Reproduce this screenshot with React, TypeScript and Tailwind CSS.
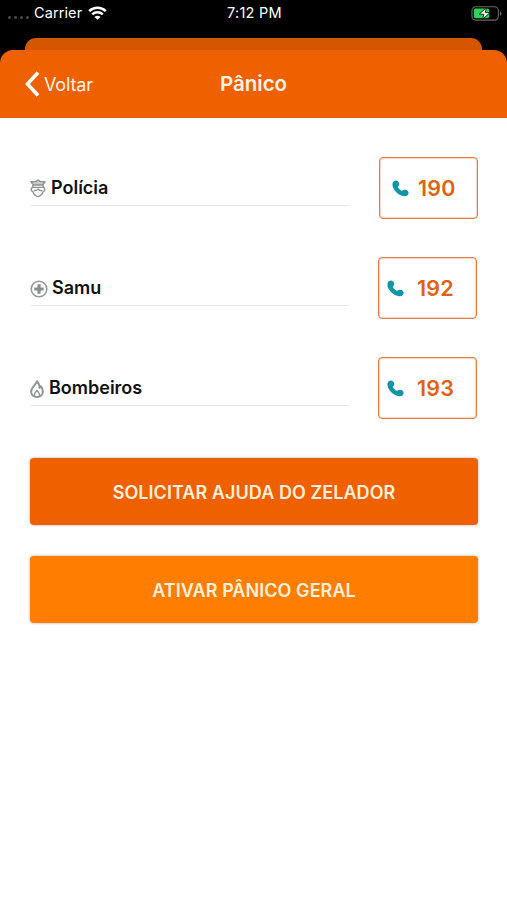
import type { ReactNode } from "react";

interface EmergencyRowProps {
  label: string;
  number: string;
  icon: ReactNode;
  className?: string;
  labelClassName: string;
  phoneClassName: string;
}

function StatusBar() {
  return (
    <div className="flex h-[38px] items-start text-white">
      <div className="flex h-[26px] flex-1 items-center pl-2">
        <div className="mt-[9px] flex gap-[3px]">
          <span className="size-[3px] rounded-full bg-[#4a4a4a]" />
          <span className="size-[3px] rounded-full bg-[#4a4a4a]" />
          <span className="size-[3px] rounded-full bg-[#4a4a4a]" />
          <span className="size-[3px] rounded-full bg-[#4a4a4a]" />
        </div>
        <span className="ml-[5px] w-[49px] text-[14.5px] tracking-[0.1px] whitespace-nowrap">Carrier</span>
        <svg className="ml-[5px]" width="19" height="14" viewBox="0 0 19 14" fill="none">
          <path d="M1.2 5.1a12 12 0 0 1 16.6 0" stroke="white" strokeWidth="2.7" />
          <path d="M4.2 8.3a7.7 7.7 0 0 1 10.6 0" stroke="white" strokeWidth="2.5" />
          <path d="M9.5 13.8 6.5 11a4.2 4.2 0 0 1 6 0Z" fill="white" />
        </svg>
      </div>
      <span className="h-[26px] w-[56px] text-[14.5px] leading-[26px] tracking-[0.25px] whitespace-nowrap">7:12 PM</span>
      <div className="flex h-[26px] flex-1 items-center justify-end pr-[5px]">
        <svg width="31" height="15" viewBox="0 0 31 15" fill="none">
          <rect x="1" y="0.7" width="26.3" height="13.4" rx="3.8" stroke="#6b6b6b" strokeWidth="1.1" />
          <path d="M29 5.1c1.9.7 1.9 4.1 0 4.8Z" fill="#6b6b6b" />
          <rect x="2.8" y="2.5" width="15.5" height="9.8" rx="2" fill="#30d158" />
          <path d="M15.6 1.7 8.2 8.2h4.7l-1.4 5.1 7.5-6.7h-4.8Z" fill="white" stroke="black" strokeWidth="0.8" />
        </svg>
      </div>
    </div>
  );
}

function PoliceIcon() {
  return (
    <svg width="16" height="19" viewBox="0 0 16 19" fill="none" stroke="#8a9392" strokeWidth="1.4" strokeLinejoin="round">
      <path d="M8 1 5.5 2.6 1 2.8 3.3 6h9.4L15 2.8l-4.500-.2Z" fill="#c9cecd" />
      <path d="M3 6.200 2.600 8.400h10.800L13 6.200" />
      <path d="M2.600 8.400C.5 9 .7 11.800 2.600 12.400 3.500 15.200 6.400 17.600 8 17.600s4.500-2.400 5.400-5.200c1.900-.6 2.100-3.400 0-4" />
      <path d="M3.600 11.700c2.300 0 3.600-.5 4.400-1.600.8 1.100 2.100 1.600 4.400 1.600" />
    </svg>
  );
}

function MedicalIcon() {
  return (
    <svg width="18" height="18" viewBox="0 0 18 18" fill="none">
      <circle cx="9" cy="9" r="7.8" stroke="#929a99" strokeWidth="1.6" />
      <path d="M9 4.300v9.400M4.300 9h9.400" stroke="#858e8d" strokeWidth="3.2" />
    </svg>
  );
}

function FireIcon() {
  return (
    <svg width="14" height="18" viewBox="0 0 14 18" fill="none" stroke="#8d9695" strokeWidth="2" strokeLinejoin="round">
      <path d="M7 1.200C6.300 4.500 1.100 7.200 1.100 11.500 1.100 14.900 3.700 17 7 17s5.900-2.100 5.900-5.500c0-2.200-1-3.900-2.200-5.200-.3.700-.6 1.200-1.200 1.500C9.500 5.100 8.500 2.700 7 1.200Z" />
      <path d="M4.600 16.300c-1-2.200.3-3.700 2.400-5.900 2.100 2.200 3.400 3.700 2.400 5.900" strokeWidth="1.4" />
    </svg>
  );
}

function PhoneIcon({ className }: { className: string }) {
  return (
    <svg className={className} width="17" height="17" viewBox="0 0 17 17" fill="#0e96a8">
      <path d="M.5 3.400C.8 1.700 2.600.3 4.200.5c1.700.2 3 1.900 3 3.500 0 1.200-.7 1.800-1.200 2.500-.3.600-.1 1 .3 1.500.8 1 1.700 1.800 2.800 2.500.6.400 1 .4 1.500 0 .8-.7 1.800-1 2.900-.8 1.700.2 3.100 1.500 3.100 3 0 1.800-1.500 3.400-3.500 3.600-2.500.2-5.700-1.300-8.300-3.600C2.200 10.400.1 6.400.5 3.400Z" />
    </svg>
  );
}

function EmergencyRow({ label, number, icon, className = "", labelClassName, phoneClassName }: EmergencyRowProps) {
  return (
    <div className={`flex h-[62px] justify-between ${className}`}>
      <div className="flex h-[49px] flex-1 items-end border-b border-[#e6e8e9] pb-[7px]">
        {icon}
        <span className={`-mb-px text-[18px] leading-[22px] font-semibold text-[#111] ${labelClassName}`}>{label}</span>
      </div>
      <button className="ml-[29px] flex w-[99px] items-center rounded-[4px] border border-[#e87b3c] shadow-[inset_0_0_1px_0.5px_rgba(232,123,60,0.6)]">
        <PhoneIcon className={phoneClassName} />
        <span className="pt-px text-[21.5px] font-semibold tracking-[0.2px] text-[#e3600f]">{number}</span>
      </button>
    </div>
  );
}

export default function App() {
  return (
    <div className="h-[900px] w-[507px] overflow-hidden bg-black font-['Inter',sans-serif]">
      <StatusBar />

      {/* Edge of the screen behind the sheet */}
      <div className="mx-[25px] h-3 rounded-t-[11px] bg-[#d45700]" />

      {/* Header */}
      <header className="flex h-[68px] items-center rounded-t-[13px] bg-[#ee6000] text-[#fff3e8]">
        <div className="flex-1">
          <button className="ml-[25px] flex items-center text-[18px] tracking-[-0.15px]">
            <svg width="15" height="26" viewBox="0 0 15 26" fill="none" stroke="white" strokeWidth="3.6">
              <path d="M13 1.500 2.500 13 13 24.500" />
            </svg>
            <span className="ml-1">Voltar</span>
          </button>
        </div>
        <h1 className="text-[20.5px] font-semibold">Pânico</h1>
        <div className="flex-1" />
      </header>

      {/* Emergency numbers */}
      <main className="h-[782px] bg-white pt-[39px] pr-[29px] pl-[30px]">
        <EmergencyRow
          label="Polícia"
          number="190"
          icon={<PoliceIcon />}
          labelClassName="ml-[5px]"
          phoneClassName="ml-[12px] mr-[9px]"
        />
        <EmergencyRow
          label="Samu"
          number="192"
          icon={<MedicalIcon />}
          className="mt-[38px] pr-[1px]"
          labelClassName="ml-1"
          phoneClassName="ml-2 mr-[13px]"
        />
        <EmergencyRow
          label="Bombeiros"
          number="193"
          icon={<FireIcon />}
          className="mt-[38px] pr-[1px]"
          labelClassName="ml-[5px]"
          phoneClassName="ml-2 mr-[13px]"
        />

        {/* Actions */}
        <button className="mt-[39px] block h-[67px] w-full rounded-[4px] bg-[#ee6000] pt-px text-[18px] font-semibold tracking-[0.06px] text-[#fff0dc] shadow-[0_0_3px_rgba(0,0,0,0.35)]">
          SOLICITAR AJUDA DO ZELADOR
        </button>
        <button className="mt-[31px] block h-[67px] w-full rounded-[4px] bg-[#ff7d00] pt-px text-[18px] font-semibold tracking-[0.06px] text-[#fff0dc] shadow-[0_0_3px_rgba(0,0,0,0.35)]">
          ATIVAR PÂNICO GERAL
        </button>
      </main>
    </div>
  );
}
